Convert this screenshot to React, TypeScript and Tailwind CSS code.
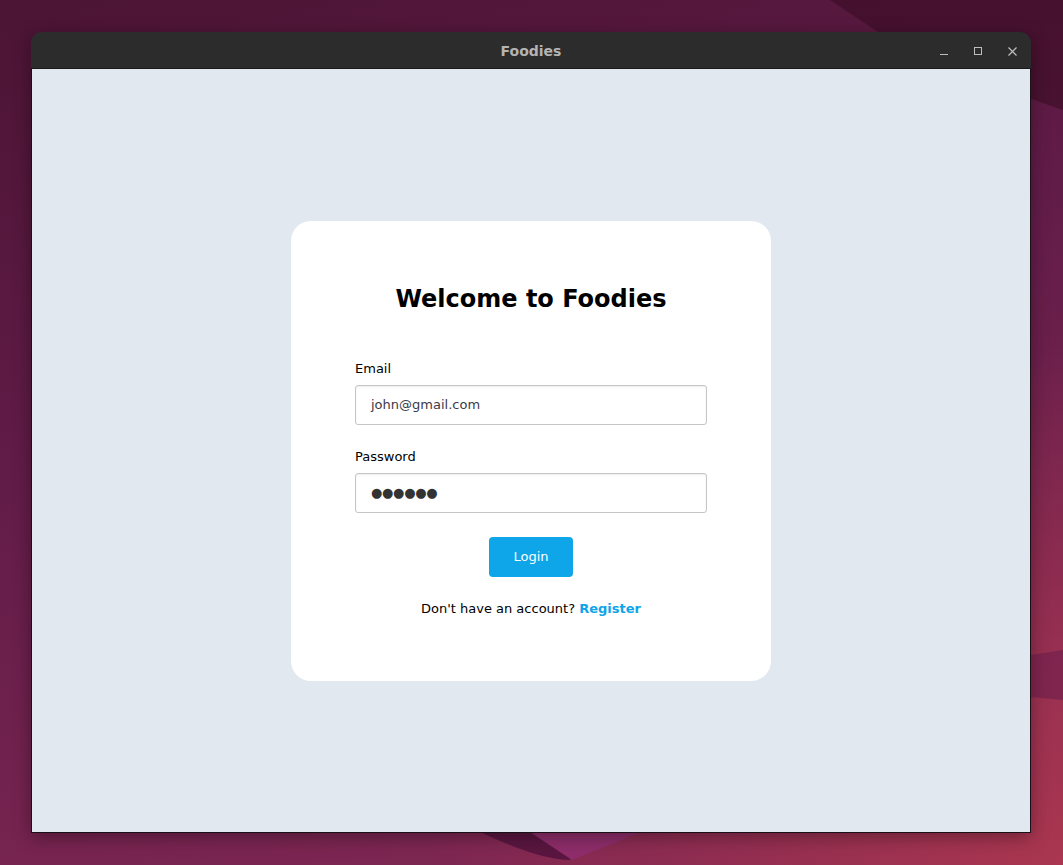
import React from "react";

const font = { fontFamily: '"DejaVu Sans", "Liberation Sans", sans-serif' };

function Wallpaper() {
  return (
    <svg className="absolute inset-0 h-full w-full" viewBox="0 0 1063 865" preserveAspectRatio="none">
      <defs>
        <linearGradient id="wp" x1="0" y1="0" x2="0.35" y2="1">
          <stop offset="0" stopColor="#4b1434" />
          <stop offset="0.5" stopColor="#621c48" />
          <stop offset="1" stopColor="#7c2652" />
        </linearGradient>
        <radialGradient id="wr" cx="1" cy="1" r="0.6">
          <stop offset="0" stopColor="#aa3650" />
          <stop offset="1" stopColor="#aa3650" stopOpacity="0" />
        </radialGradient>
      </defs>
      <rect width="1063" height="865" fill="url(#wp)" />
      <rect width="1063" height="865" fill="url(#wr)" />
      <path d="M830 0 L1063 0 L1063 110 L920 60 Z" fill="#360b21" opacity="0.55" />
      <path d="M480 832 Q540 860 570 860 L600 832 Z" fill="#5a1640" />
      <path d="M530 832 L572 860 Q610 845 640 832 Z" fill="#8e2d6a" />
      <path d="M1031 655 L1063 650 L1063 700 L1031 697 Z" fill="#6e1e4c" opacity="0.6" />
    </svg>
  );
}

function Field({ label, children }: { label: string; children: React.ReactNode }) {
  return (
    <div className="flex flex-col">
      <label className="text-[13px] leading-5 text-black mb-1.5">{label}</label>
      <div className="h-10 rounded-[3px] border border-[#c6c6c6] bg-white px-[15px] flex items-center shadow-[inset_0_1px_2px_rgba(0,0,0,0.08)]">
        {children}
      </div>
    </div>
  );
}

export default function App() {
  return (
    <div className="relative h-[865px] w-[1063px] overflow-hidden" style={font}>
      <Wallpaper />
      <div className="relative pt-[32px] pl-[31px]">
        <div className="w-[1000px] h-[801px] flex flex-col rounded-t-[11px] overflow-hidden shadow-[0_4px_18px_rgba(0,0,0,0.35)]">
          <div className="h-[37px] bg-[#2c2c2c] flex items-center relative shrink-0 border-b border-[#1a1a1a]">
            <div className="flex-1 text-center text-[14px] font-bold text-[#b4b4b4] pt-[3px]">Foodies</div>
            <div className="absolute right-0 top-0 h-full flex items-center pt-[2px] text-[#bdbdbd]">
              <div className="w-[34px] flex justify-center">
                <div className="w-[8px] h-px bg-[#bdbdbd] mt-[6px]" />
              </div>
              <div className="w-[34px] flex justify-center">
                <div className="w-[8px] h-[8px] border border-[#bdbdbd]" />
              </div>
              <div className="w-[34px] flex justify-center mr-[2px]">
                <svg width="9" height="9" viewBox="0 0 9 9">
                  <path d="M0.5 0.5 L8.5 8.5 M8.5 0.5 L0.5 8.5" stroke="#bdbdbd" strokeWidth="1.2" />
                </svg>
              </div>
            </div>
          </div>
          <div className="flex-1 bg-[#e2e8f0] border-x border-b border-[#1c1018] flex items-center justify-center pt-px">
            <div className="w-[480px] h-[460px] bg-white rounded-[20px] px-16 pt-[62px] flex flex-col">
              <h1 className="text-[24px] leading-8 font-bold text-black text-center">Welcome to Foodies</h1>
              <div className="mt-11 flex flex-col gap-[22px]">
                <Field label="Email">
                  <span className="text-[13px] text-[#3a3a48]">john@gmail.com</span>
                </Field>
                <Field label="Password">
                  <span className="text-[13px] text-[#333] tracking-[-0.3px]">●●●●●●</span>
                </Field>
              </div>
              <div className="mt-6 flex justify-center">
                <button className="h-10 w-[84px] rounded-[4px] bg-[#0ea5e9] text-white text-[13px]">Login</button>
              </div>
              <p className="mt-[22px] text-center text-[13px] leading-5 text-black">
                Don't have an account? <a className="font-bold text-[#0ea5e9]">Register</a>
              </p>
            </div>
          </div>
        </div>
      </div>
    </div>
  );
}
